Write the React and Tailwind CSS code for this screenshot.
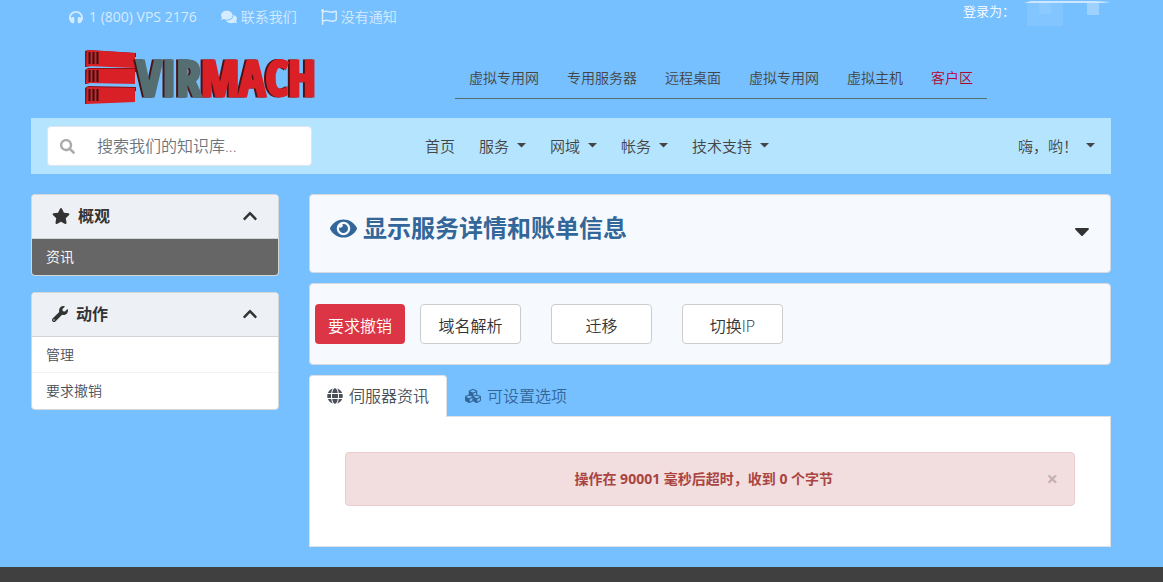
import { useState } from 'react'
import {
  FaChevronUp,
  FaCaretDown,
  FaComments,
  FaCubes,
  FaEye,
  FaGlobe,
  FaHeadphones,
  FaRegFlag,
  FaSearch,
  FaStar,
  FaWrench,
} from 'react-icons/fa'

const siteLinks = ['虚拟专用网', '专用服务器', '远程桌面', '虚拟专用网', '虚拟主机', '客户区']

const menu = [
  { label: '首页', dropdown: false },
  { label: '服务', dropdown: true },
  { label: '网域', dropdown: true },
  { label: '帐务', dropdown: true },
  { label: '技术支持', dropdown: true },
]

function Caret() {
  return (
    <svg width="9" height="5" viewBox="0 0 9 5" className="mb-px shrink-0" aria-hidden="true">
      <path d="M0 0h9L4.500 4.500z" fill="currentColor" />
    </svg>
  )
}

function Server({ d, side, y }) {
  return (
    <g>
      <path d={side} fill="#8e1016" />
      <path d={d} fill="#da2027" />
      <path d={`M5.500 ${y}v12M9.500 ${y}v12M13.500 ${y}v12`} stroke="#2b1416" strokeWidth="2" />
    </g>
  )
}

function Logo() {
  return (
    <svg width="232" height="58" viewBox="0 0 232 58" role="img" aria-label="VIRMACH" className="overflow-visible">
      <Server side="M1 2L4 1 52 4v4L2 18H1z" d="M3 1l48 3v15L2 17z" y="3" />
      <Server side="M1 21l3-2h48v4L2 35H1z" d="M3 20h48v15L2 34z" y="21" />
      <Server side="M1 39l3-2 48 1v4L2 55H1z" d="M3 38l48 1v14L2 55z" y="40" />
      <text
        x="53"
        y="47"
        fontFamily="'Open Sans Condensed', 'Roboto Condensed', sans-serif"
        fontWeight="700"
        fontSize="49"
        strokeWidth="3"
        className="drop-shadow-[-2px_0_0_#4a1417]"
      >
        <tspan fill="#546e71" stroke="#546e71">VIR</tspan>
        <tspan fill="#da2027" stroke="#da2027">MACH</tspan>
      </text>
    </svg>
  )
}

function SidePanel({ icon, title, items }) {
  const [open, setOpen] = useState(true)

  return (
    <section className="overflow-hidden rounded border border-[#d5d8db] bg-white">
      <button
        onClick={() => setOpen(!open)}
        className="flex h-11 w-full items-center border-b border-[#cfd3d7] bg-[#edf1f5] px-5 pb-0.5 text-base font-bold text-[#333]"
      >
        {icon}
        <span className="ml-2">{title}</span>
        <FaChevronUp className={'ml-auto ' + (open ? '' : 'rotate-180')} />
      </button>
      {open && (
        <ul>
          {items.map((item, i) => (
            <li key={item.label}>
              <a
                href="#"
                className={
                  'flex h-9 items-center px-3.5 text-sm ' +
                  (item.active ? 'bg-[#666] text-white ' : 'text-[#495057] ') +
                  (i < items.length - 1 ? 'border-b border-[#f0f2f4]' : '')
                }
              >
                {item.label}
              </a>
            </li>
          ))}
        </ul>
      )}
    </section>
  )
}

function Tab({ icon, label, active, onClick }) {
  return (
    <button
      role="tab"
      aria-selected={active}
      onClick={onClick}
      className={
        'flex h-[42px] items-center gap-1.5 rounded-t border border-b-0 px-[17px] pb-0.5 ' +
        (active ? 'z-10 border-[#dee2e6] bg-white text-[#495057]' : 'border-transparent text-[#369]')
      }
    >
      {icon}
      {label}
    </button>
  )
}

export default function App() {
  const [tab, setTab] = useState('server')
  const [alertOpen, setAlertOpen] = useState(true)

  return (
    <div className="flex min-h-screen flex-col bg-[#77c0ff] font-['Open_Sans','Noto_Sans_CJK_SC',sans-serif] font-[350] text-[#444]">
      <div className="pr-[21px]">
        <div className="mx-auto max-w-[1080px]">
          {/* Top bar */}
          <div className="flex h-[34px] items-center pl-[38px] text-sm text-[#d5ebff]">
            <a href="#" className="flex items-center gap-1.5 font-normal">
              <FaHeadphones />
              1 (800) VPS 2176
            </a>
            <a href="#" className="ml-6 flex items-center gap-1">
              <FaComments className="text-base" />
              联系我们
            </a>
            <a href="#" className="ml-6 flex items-center gap-1">
              <FaRegFlag className="text-base" />
              没有通知
            </a>
            <div className="ml-auto flex self-start text-[13px] leading-[22px] text-white">
              <span>登录为：</span>
              <svg width="96" height="28" viewBox="0 0 96 28" aria-hidden="true">
                <path d="M12 2h36v24H12z" fill="#83c5ff" />
                <path d="M24 2h12v12H24z" fill="#8cc9ff" />
                <path d="M72 2h12v13H72z" fill="#9dd1ff" />
                <path d="M9 3l7-2h64l16 1-8 1z" fill="#cde7ff" />
              </svg>
            </div>
          </div>

          {/* Logo and site links */}
          <header className="flex h-[84px] pt-[15px] pl-[53px]">
            <a href="#">
              <Logo />
            </a>
            <nav className="ml-[139px] flex h-[50px] items-center gap-7 self-start border-b border-[#546e71] px-3.5 pt-2 text-sm">
              {siteLinks.map((label, i) => (
                <a key={i} href="#" className={label === '客户区' ? 'text-[#b4002d]' : 'text-[#444]'}>
                  {label}
                </a>
              ))}
            </nav>
          </header>

          {/* Main menu */}
          <div className="flex h-14 items-center bg-[#b5e4ff] px-4 text-[15px]">
            <label className="flex h-10 w-[265px] items-center rounded border border-[#dde6ee] bg-white pl-3">
              <FaSearch className="shrink-0 text-[15px] text-[#aaa]" />
              <input
                type="search"
                aria-label="搜索"
                placeholder="搜索我们的知识库..."
                className="ml-[22px] w-full min-w-0 text-base outline-none placeholder:text-[#6c757d]"
              />
            </label>
            <nav className="ml-[113px] flex items-center gap-6">
              {menu.map((m) => (
                <a key={m.label} href="#" className="flex items-center gap-2">
                  {m.label}
                  {m.dropdown && <Caret />}
                </a>
              ))}
            </nav>
            <button className="ml-auto flex items-center gap-2">
              嗨，哟！
              <Caret />
            </button>
          </div>

          {/* Content */}
          <div className="flex gap-[30px] pt-5 pb-5">
            <aside className="flex w-[248px] shrink-0 flex-col gap-4">
              <SidePanel icon={<FaStar className="text-lg" />} title="概观" items={[{ label: '资讯', active: true }]} />
              <SidePanel icon={<FaWrench />} title="动作" items={[{ label: '管理' }, { label: '要求撤销' }]} />
            </aside>

            <main className="min-w-0 flex-1">
              <section className="flex h-[79px] items-start rounded border border-[#d3d9de] bg-[#f6fafe] px-5 pt-[17px]">
                <h1 className="flex items-center gap-1.5 text-2xl font-bold text-[#369]">
                  <FaEye className="text-[27px]" />
                  显示服务详情和账单信息
                </h1>
                <button aria-label="展开" className="mt-[7px] ml-auto text-2xl text-[#333]">
                  <FaCaretDown className="-mr-1" />
                </button>
              </section>

              <section className="mt-2.5 flex h-[82px] items-center rounded border border-[#d3d9de] bg-[#f6fafe] px-[5px] text-base text-[#333]">
                <button className="h-10 rounded bg-[#dc3545] px-[13px] pt-[3px] text-white">要求撤销</button>
                <div className="ml-[15px] flex gap-[30px]">
                  {['域名解析', '迁移', '切换IP'].map((label) => (
                    <button key={label} className="h-10 w-[101px] rounded border border-[#ccc] bg-white pt-[3px]">
                      {label}
                    </button>
                  ))}
                </div>
              </section>

              <div role="tablist" className="mt-2.5 -mb-px flex text-base">
                <Tab icon={<FaGlobe />} label="伺服器资讯" active={tab === 'server'} onClick={() => setTab('server')} />
                <Tab icon={<FaCubes />} label="可设置选项" active={tab === 'options'} onClick={() => setTab('options')} />
              </div>
              <div className="min-h-[131px] border border-[#dee2e6] bg-white px-[35px] pt-[35px] pb-10">
                {alertOpen && (
                  <div
                    role="alert"
                    className="flex h-[54px] items-center rounded border border-[#ebccd1] bg-[#f2dede] pr-4 pl-[15px] text-sm font-bold text-[#a94442]"
                  >
                    <p className="flex-1 text-center">操作在 90001 毫秒后超时，收到 0 个字节</p>
                    <button aria-label="关闭" onClick={() => setAlertOpen(false)} className="text-xl text-[#c3b2b2]">
                      ×
                    </button>
                  </div>
                )}
              </div>
            </main>
          </div>
        </div>
      </div>
      <footer className="min-h-[15px] flex-1 bg-[#404040]" />
    </div>
  )
}
